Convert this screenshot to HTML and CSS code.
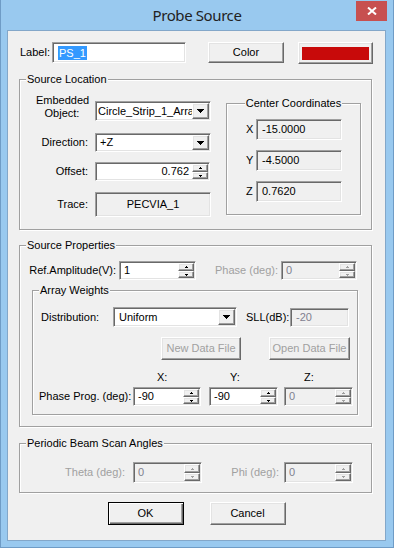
FILE: index.html
```html
<!DOCTYPE html>
<html>
<head>
<meta charset="utf-8">
<title>Probe Source</title>
<link rel="stylesheet" href="styles.css">
</head>
<body>
<div class="window">
  <div class="titlebar">
    <div class="title">Probe Source</div>
    <div class="close"><svg width="10" height="8" viewBox="0 0 10 8"><path d="M1 0.5 L9 7.5 M9 0.5 L1 7.5" stroke="#fff" stroke-width="2"/></svg></div>
  </div>
  <div class="client">
    <div class="label-row">
      <span class="lbl-label">Label:</span>
      <div class="edit label-edit"><span class="sel">PS_1</span></div>
      <div class="btn color-btn">Color</div>
      <div class="btn swatch-btn"><span class="swatch"></span></div>
    </div>
    <div class="groups">
      <div class="group g-loc">
        <div class="legend">Source Location</div>
        <div class="loc-body">
          <div class="loc-left">
            <div class="row r1">
              <div class="rlabel emb">Embedded<br>Object:</div>
              <div class="edit combo c1"><span class="ctext">Circle_Strip_1_Array</span><span class="btn dd"><svg width="7" height="4"><path d="M0 0h7v1H6v1H5v1H4v1H3V3H2V2H1V1H0z"/></svg></span></div>
            </div>
            <div class="row r2">
              <div class="rlabel">Direction:</div>
              <div class="edit combo c2"><span class="ctext">+Z</span><span class="btn dd"><svg width="7" height="4"><path d="M0 0h7v1H6v1H5v1H4v1H3V3H2V2H1V1H0z"/></svg></span></div>
            </div>
            <div class="row r3">
              <div class="rlabel">Offset:</div>
              <div class="edit spin s-offset"><span class="val right">0.762</span><span class="ud"><span class="btn up"><svg width="3" height="2"><path d="M1 0h1v1h1v1H0V1h1z"/></svg></span><span class="btn down"><svg width="3" height="2"><path d="M0 0h3v1H2v1H1V1H0z"/></svg></span></span></div>
            </div>
            <div class="row r4">
              <div class="rlabel">Trace:</div>
              <div class="edit ro trace">PECVIA_1</div>
            </div>
          </div>
          <div class="group g-center">
            <div class="legend centered">Center Coordinates</div>
            <div class="crow first"><span class="clabel">X</span><div class="edit ro cbox">-15.0000</div></div>
            <div class="crow"><span class="clabel">Y</span><div class="edit ro cbox">-4.5000</div></div>
            <div class="crow"><span class="clabel">Z</span><div class="edit ro cbox">0.7620</div></div>
          </div>
        </div>
      </div>

      <div class="group g-props">
        <div class="legend">Source Properties</div>
        <div class="ref-row">
          <div class="ref-label">Ref.Amplitude(V):</div>
          <div class="edit spin s-ref"><span class="val">1</span><span class="ud"><span class="btn up"><svg width="3" height="2"><path d="M1 0h1v1h1v1H0V1h1z"/></svg></span><span class="btn down"><svg width="3" height="2"><path d="M0 0h3v1H2v1H1V1H0z"/></svg></span></span></div>
          <div class="phase-label dis">Phase (deg):</div>
          <div class="edit spin ro disabled s-phase"><span class="val">0</span><span class="ud"><span class="btn up"><svg width="3" height="2"><path d="M1 0h1v1h1v1H0V1h1z"/></svg></span><span class="btn down"><svg width="3" height="2"><path d="M0 0h3v1H2v1H1V1H0z"/></svg></span></span></div>
        </div>

        <div class="group g-array">
          <div class="legend">Array Weights</div>
          <div class="dist-row">
            <div class="dist-label">Distribution:</div>
            <div class="edit combo c3"><span class="ctext">Uniform</span><span class="btn dd"><svg width="7" height="4"><path d="M0 0h7v1H6v1H5v1H4v1H3V3H2V2H1V1H0z"/></svg></span></div>
            <div class="sll-label">SLL(dB):</div>
            <div class="edit ro disabled sll">-20</div>
          </div>
          <div class="btn-row">
            <div class="btn dbtn new-btn">New Data File</div>
            <div class="btn dbtn open-btn">Open Data File</div>
          </div>
          <div class="xyz-row">
            <span></span>
            <span class="xl">X:</span>
            <span class="yl">Y:</span>
            <span class="zl">Z:</span>
          </div>
          <div class="pp-row">
            <div class="pp-label">Phase Prog. (deg):</div>
            <div class="edit spin s-x"><span class="val">-90</span><span class="ud"><span class="btn up"><svg width="3" height="2"><path d="M1 0h1v1h1v1H0V1h1z"/></svg></span><span class="btn down"><svg width="3" height="2"><path d="M0 0h3v1H2v1H1V1H0z"/></svg></span></span></div>
            <div class="edit spin s-y"><span class="val">-90</span><span class="ud"><span class="btn up"><svg width="3" height="2"><path d="M1 0h1v1h1v1H0V1h1z"/></svg></span><span class="btn down"><svg width="3" height="2"><path d="M0 0h3v1H2v1H1V1H0z"/></svg></span></span></div>
            <div class="edit spin ro disabled s-z"><span class="val">0</span><span class="ud"><span class="btn up"><svg width="3" height="2"><path d="M1 0h1v1h1v1H0V1h1z"/></svg></span><span class="btn down"><svg width="3" height="2"><path d="M0 0h3v1H2v1H1V1H0z"/></svg></span></span></div>
          </div>
        </div>
      </div>

      <div class="group g-periodic">
        <div class="legend">Periodic Beam Scan Angles</div>
        <div class="per-row">
          <div class="theta-label dis">Theta (deg):</div>
          <div class="edit spin ro disabled s-theta"><span class="val">0</span><span class="ud"><span class="btn up"><svg width="3" height="2"><path d="M1 0h1v1h1v1H0V1h1z"/></svg></span><span class="btn down"><svg width="3" height="2"><path d="M0 0h3v1H2v1H1V1H0z"/></svg></span></span></div>
          <div class="phi-label dis">Phi (deg):</div>
          <div class="edit spin ro disabled s-phi"><span class="val">0</span><span class="ud"><span class="btn up"><svg width="3" height="2"><path d="M1 0h1v1h1v1H0V1h1z"/></svg></span><span class="btn down"><svg width="3" height="2"><path d="M0 0h3v1H2v1H1V1H0z"/></svg></span></span></div>
        </div>
      </div>
    </div>

    <div class="ok-row">
      <div class="btn ok">OK</div>
      <div class="btn cancel">Cancel</div>
    </div>
  </div>
</div>
</body>
</html>
```
FILE: styles.css
```css
* { box-sizing: border-box; }
html, body { margin: 0; padding: 0; }
body {
  width: 394px;
  height: 548px;
  overflow: hidden;
  font-family: "Liberation Sans", Arial, sans-serif;
  font-size: 11px;
  line-height: 13px;
  color: #000;
  background: #99c9ef;
}

.window {
  width: 394px;
  height: 548px;
  background: #99c9ef;
  border: 1px solid #6f9cc6;
  border-top: 0;
}

.titlebar {
  height: 30px;
  display: grid;
  grid-template-columns: 1fr auto 1fr;
  align-items: start;
}
.title {
  grid-column: 2;
  font-family: "Noto Sans", "Open Sans", sans-serif;
  font-size: 15px;
  letter-spacing: -0.4px;
  line-height: 30px;
  color: #222;
}
.close {
  grid-column: 3;
  justify-self: end;
  margin: 1px 6px 0 0;
  width: 31px;
  height: 20px;
  background: #c75050;
  display: flex;
  align-items: center;
  justify-content: center;
}

.client {
  margin-left: 6px;
  width: 379px;
  height: 511px;
  border: 1px solid #83a7c9;
  background: #f0f0f0;
}

/* generic controls */
.edit {
  border: 1px solid;
  border-color: #a0a0a0 #fff #fff #a0a0a0;
  box-shadow: inset 1px 1px 0 #696969, inset -1px -1px 0 #e3e3e3;
  background: #fff;
}
.edit.ro { background: #f0f0f0; }
.btn {
  border: 1px solid;
  border-color: #fff #696969 #696969 #fff;
  box-shadow: inset -1px -1px 0 #a0a0a0, inset 1px 1px 0 #e3e3e3;
  background: #f0f0f0;
  display: flex;
  align-items: center;
  justify-content: center;
}
.dis { color: #a0a0a0; }

.combo {
  display: flex;
  padding: 1px;
}
.ctext {
  flex: 1;
  min-width: 0;
  overflow: hidden;
  white-space: nowrap;
  display: flex;
  align-items: center;
  padding-left: 3px;
}
.dd {
  width: 17px;
  flex: none;
}
.dd svg { fill: #000; display: block; }

.spin {
  display: flex;
  padding: 1px;
}
.spin .val {
  flex: 1;
  display: flex;
  align-items: center;
  padding-left: 3px;
  white-space: nowrap;
}
.spin .val.right {
  justify-content: flex-end;
  padding-right: 3px;
}
.ud {
  width: 16px;
  flex: none;
  display: flex;
  flex-direction: column;
}
.ud .btn { flex: 1; }
.ud .btn.up { flex: none; height: 8px; }
.ud svg { display: block; fill: #000; }
.disabled .val { color: #80808f; }
.disabled .ud svg { fill: #a0a0a0; }

/* label row */
.label-row {
  display: flex;
  align-items: center;
  padding: 11px 0 0 12px;
  height: 32px;
}
.lbl-label { width: 32px; }
.label-edit {
  width: 134px;
  height: 21px;
  display: flex;
  align-items: center;
  padding-left: 5px;
}
.sel {
  background: #3399ff;
  color: #fff;
  line-height: 14px;
  padding: 0 1px;
}
.color-btn {
  margin-left: 22px;
  width: 76px;
  height: 21px;
}
.swatch-btn {
  margin-left: 14px;
  width: 75px;
  height: 22px;
  align-items: flex-start;
  justify-content: flex-start;
  padding: 4px 0 0 3px;
}
.swatch {
  display: block;
  width: 67px;
  height: 13px;
  background: #c80a0a;
}

/* group boxes */
.groups { padding-left: 11px; }
.group {
  border: 1px solid #a0a0a0;
  box-shadow: inset 1px 1px 0 #fff, 1px 1px 0 #fff;
}
.legend {
  width: fit-content;
  margin: -7px 0 0 6px;
  padding: 0 1px;
  line-height: 13px;
  height: 13px;
  background: #f0f0f0;
  white-space: nowrap;
}
.legend.centered { margin: -7px auto 0; }

/* source location */
.g-loc {
  margin-top: 16px;
  width: 353px;
  height: 151px;
}
.loc-body {
  display: flex;
  align-items: flex-start;
}
.loc-left { width: 191px; flex: none; }
.row {
  display: flex;
  align-items: center;
}
.rlabel {
  width: 68px;
  margin-right: 7px;
  text-align: right;
  flex: none;
}
.r1 { margin-top: 8px; align-items: flex-start; }
.rlabel.emb { text-align: center; padding-left: 16px; }
.c1 { margin-top: 7px; width: 116px; height: 20px; }
.c1 .ctext { padding-left: 1px; }
.r2 { margin-top: 12px; }
.c2 { width: 116px; height: 19px; }
.r3 { margin-top: 10px; }
.s-offset { width: 115px; height: 19px; }
.r4 { margin-top: 11px; }
.trace {
  width: 116px;
  height: 25px;
  display: flex;
  align-items: center;
  justify-content: center;
}

.g-center {
  flex: none;
  margin: 17px 0 0 15px;
  width: 135px;
  height: 112px;
}
.crow {
  display: flex;
  align-items: center;
  margin-top: 10px;
  padding-left: 19px;
}
.crow.first { margin-top: 9px; }
.clabel { width: 10px; }
.cbox {
  width: 86px;
  height: 21px;
  display: flex;
  align-items: center;
  padding-left: 5px;
}

/* source properties */
.g-props {
  margin-top: 15px;
  width: 353px;
  height: 182px;
}
.ref-row {
  margin-top: 9px;
  display: flex;
  align-items: center;
  height: 19px;
}
.ref-label { width: 96px; margin-right: 3px; text-align: right; white-space: nowrap; }
.s-ref { width: 77px; height: 19px; }
.phase-label { width: 82px; margin-right: 3px; text-align: right; white-space: nowrap; }
.s-phase { width: 76px; height: 19px; }

.g-array {
  margin: 10px 0 0 12px;
  width: 326px;
  height: 125px;
}
.dist-row {
  margin-top: 10px;
  display: flex;
  align-items: center;
  height: 20px;
}
.dist-label { width: 80px; padding-left: 8px; }
.c3 { width: 124px; height: 20px; }
.c3 .ctext { padding-left: 4px; }
.sll-label { margin-left: 9px; width: 44px; white-space: nowrap; }
.sll {
  width: 59px;
  height: 19px;
  display: flex;
  align-items: center;
  padding-left: 5px;
  color: #80808f;
}
.btn-row {
  margin-top: 10px;
  display: flex;
}
.dbtn { height: 23px; color: #a0a0a0; }
.new-btn { margin-left: 128px; width: 80px; }
.open-btn { margin-left: 28px; width: 81px; }

.xyz-row,
.pp-row {
  display: grid;
  grid-template-columns: 100px 76px 75px 69px;
  align-items: center;
}
.xyz-row { margin-top: 11px; height: 13px; }
.xl { padding-left: 24px; }
.yl { padding-left: 21px; }
.zl { padding-left: 20px; }
.pp-row { margin-top: 3px; height: 19px; }
.pp-label { padding-left: 6px; white-space: nowrap; }
.s-x { width: 68px; height: 19px; }
.s-y { width: 69px; height: 19px; }
.s-z { width: 69px; height: 19px; }

/* periodic */
.g-periodic {
  margin-top: 16px;
  width: 353px;
  height: 50px;
}
.per-row {
  margin-top: 12px;
  display: flex;
  align-items: center;
  height: 21px;
}
.theta-label { width: 105px; margin-right: 8px; text-align: right; }
.s-theta { width: 69px; height: 21px; }
.phi-label { width: 77px; margin-right: 5px; text-align: right; }
.s-phi { width: 69px; height: 21px; }
.s-theta .ud .btn.up, .s-phi .ud .btn.up { height: 9px; }

/* ok / cancel */
.ok-row {
  margin-top: 9px;
  display: flex;
  justify-content: center;
  gap: 26px;
}
.ok-row .btn { width: 76px; height: 23px; }
.ok {
  border-color: #000;
  box-shadow: inset 1px 1px 0 #fff, inset -1px -1px 0 #696969, inset -2px -2px 0 #a0a0a0;
}
```
